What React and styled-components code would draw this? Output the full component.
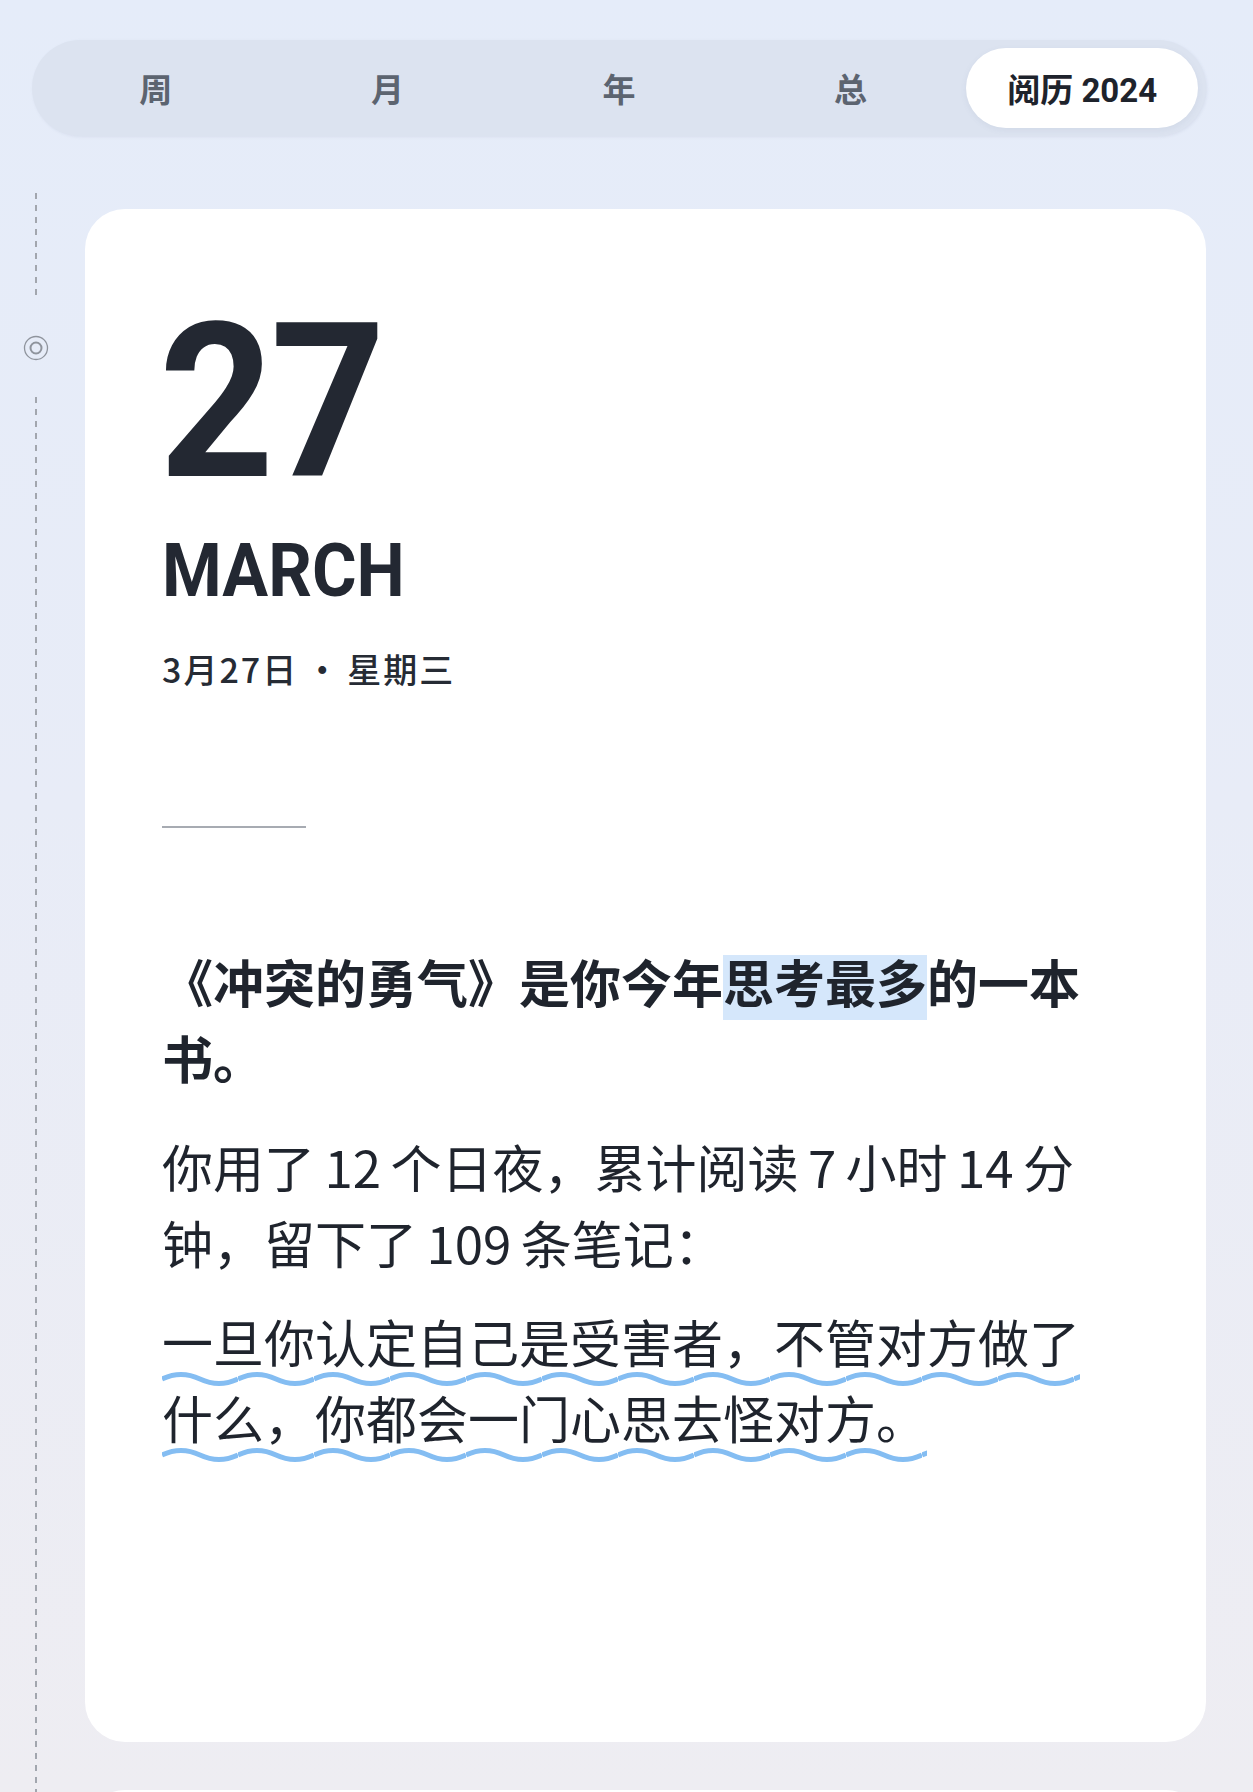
import React from "react";
import styled, { createGlobalStyle } from "styled-components";

const GlobalStyle = createGlobalStyle`
  html, body { margin: 0; padding: 0; }
  body {
    font-family: "Noto Sans CJK SC", "Noto Sans", sans-serif;
    color: #1f242d;
    background: #e9ecf6;
  }
`;

const wave = `url("data:image/svg+xml,%3Csvg xmlns='http://www.w3.org/2000/svg' width='76' height='16' viewBox='0 0 76 16'%3E%3Cpath d='M0 8 Q19 -1 38 8 T76 8' fill='none' stroke='%2384bdf2' stroke-width='5'/%3E%3C/svg%3E")`;

const Page = styled.div`
  height: 100vh;
  overflow: hidden;
  box-sizing: border-box;
  padding: 40px 47px 0 0;
  display: flex;
  flex-direction: column;
  background: linear-gradient(180deg, #e5ecf9 0%, #e8ecf7 45%, #eeedf2 100%);
`;

const TabBar = styled.nav`
  margin-left: 32px;
  height: 96px;
  box-sizing: border-box;
  padding: 8px;
  border-radius: 48px;
  background: #dce3f0;
  box-shadow: 1px 1px 3px rgba(120, 135, 165, 0.12);
  display: grid;
  grid-template-columns: repeat(5, 1fr);
`;

const Tab = styled.div`
  display: flex;
  align-items: center;
  justify-content: center;
  border-radius: 40px;
  font-size: 33px;
  font-weight: 700;
  font-family: "Roboto", "Noto Sans CJK SC", sans-serif;
  color: ${(p) => (p.$active ? "#1e232c" : "#5c6470")};
  background: ${(p) => (p.$active ? "#ffffff" : "transparent")};
  box-shadow: ${(p) => (p.$active ? "0 2px 6px rgba(90, 105, 140, 0.08)" : "none")};
`;

const Row = styled.div`
  margin-top: 57px;
  flex: 1;
  min-height: 0;
  display: grid;
  grid-template-columns: 72px 1fr;
  column-gap: 13px;
`;

const Timeline = styled.div`
  display: flex;
  flex-direction: column;
  align-items: center;
`;

const Dash = styled.div`
  width: 1.5px;
  height: ${(p) => (p.$h ? `${p.$h}px` : "auto")};
  flex: ${(p) => (p.$h ? "none" : "1")};
  background: repeating-linear-gradient(to bottom, #a2a6ae 0 6px, transparent 6px 12px);
`;

const RingWrap = styled.div`
  margin: 38px 0 36px;
  width: 26px;
  height: 26px;
  display: flex;
`;

const Cards = styled.div`
  display: flex;
  flex-direction: column;
  gap: 48px;
  padding-top: 16px;
`;

const Card = styled.article`
  background: #ffffff;
  border-radius: 40px;
  min-height: 1533px;
  box-sizing: border-box;
  padding: 86px 77px 0;
`;

const DayNum = styled.div`
  margin-left: -3px;
  font-family: "Roboto", sans-serif;
  font-weight: 700;
  font-size: 216px;
  line-height: 1;
  letter-spacing: -4px;
  color: #232832;
  transform: scaleX(0.93);
  transform-origin: left center;
`;

const Month = styled.div`
  margin-top: 22px;
  font-family: "Roboto", sans-serif;
  font-weight: 700;
  font-size: 75px;
  line-height: 1;
  color: #232832;
  transform: scaleX(0.91);
  transform-origin: left center;
`;

const DateLine = styled.div`
  margin-top: 41px;
  font-size: 34px;
  font-weight: 500;
  line-height: 40px;
  letter-spacing: 2px;
  color: #262b34;
`;

const Dot = styled.span`
  margin: 0 6px 0 7px;
`;

const Divider = styled.hr`
  margin: 137px 0 0;
  width: 144px;
  height: 1.5px;
  border: none;
  background: #a7abb2;
`;

const Text = styled.p`
  margin: ${(p) => p.$mt}px 0 0;
  max-width: 955px;
  font-size: 51px;
  line-height: 76px;
  font-weight: ${(p) => (p.$bold ? 700 : 400)};
  word-spacing: ${(p) => (p.$tight ? "-2px" : "normal")};
  color: #1f242d;
`;

const Mark = styled.span`
  background: linear-gradient(#d5e7fb, #d5e7fb) no-repeat;
  background-size: 100% 65px;
  background-position: 0 100%;
  padding-bottom: 2px;
`;

const Wavy = styled.span`
  background-image: ${wave};
  background-repeat: repeat-x;
  background-size: 76px 16px;
  background-position: 0 100%;
  padding-bottom: 9px;
  -webkit-box-decoration-break: clone;
  box-decoration-break: clone;
`;

function Ring() {
  return (
    <RingWrap>
      <svg width="26" height="26" viewBox="0 0 26 26">
        <circle cx="13" cy="13" r="11.5" fill="none" stroke="#8f949d" strokeWidth="1.3" />
        <circle cx="13" cy="13" r="5.5" fill="none" stroke="#8f949d" strokeWidth="2" />
      </svg>
    </RingWrap>
  );
}

const tabs = ["周", "月", "年", "总", "阅历 2024"];

const entry = {
  day: "27",
  month: "MARCH",
  date: "3月27日",
  week: "星期三",
  book: "《冲突的勇气》",
  stats: "你用了 12 个日夜，累计阅读 7 小时 14 分钟，留下了 109 条笔记：",
  quote: "一旦你认定自己是受害者，不管对方做了什么，你都会一门心思去怪对方。",
};

export default function App() {
  return (
    <>
      <GlobalStyle />
      <Page>
        <TabBar>
          {tabs.map((t, i) => (
            <Tab key={t} $active={i === tabs.length - 1}>
              {t}
            </Tab>
          ))}
        </TabBar>
        <Row>
          <Timeline>
            <Dash $h={104} />
            <Ring />
            <Dash />
          </Timeline>
          <Cards>
            <Card>
              <DayNum>{entry.day}</DayNum>
              <Month>{entry.month}</Month>
              <DateLine>
                {entry.date}
                <Dot>·</Dot>
                {entry.week}
              </DateLine>
              <Divider />
              <Text $bold $mt={115}>
                {entry.book}是你今年<Mark>思考最多</Mark>的一本书。
              </Text>
              <Text $tight $mt={33}>
                {entry.stats}
              </Text>
              <Text $mt={23}>
                <Wavy>{entry.quote}</Wavy>
              </Text>
            </Card>
            <Card aria-hidden="true" />
          </Cards>
        </Row>
      </Page>
    </>
  );
}
